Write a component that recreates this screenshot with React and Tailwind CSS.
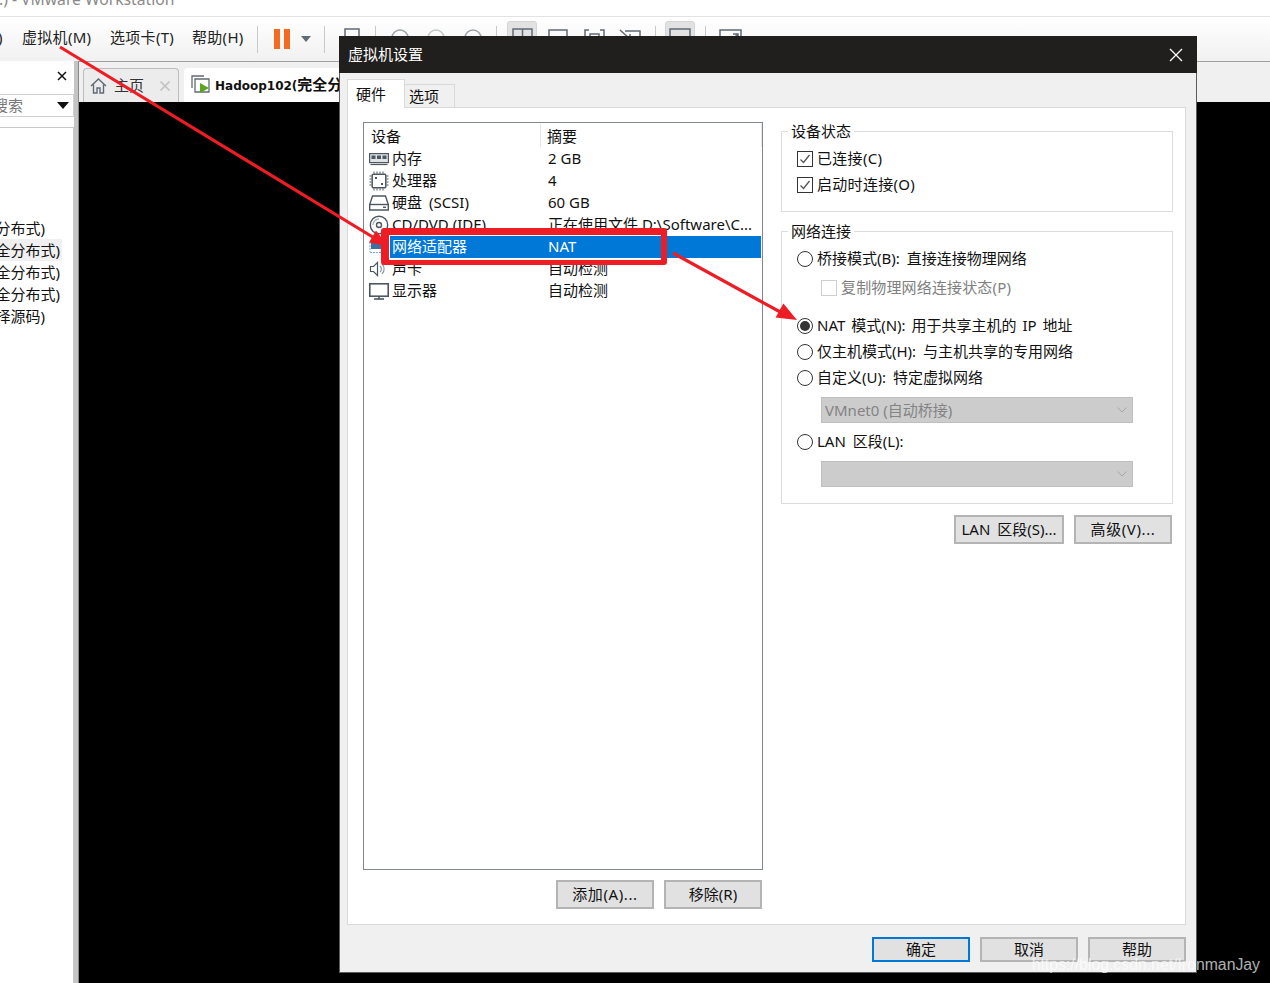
const ui = { fontFamily: '"Noto Sans","Noto Sans CJK SC",sans-serif' };

const G = "#5f6b75";
const D = "#4c5761";

function ToolSep({ ml }) {
  return <span className={`w-px h-[27px] bg-[#c9c9c9] shrink-0 ${ml}`} />;
}

function Rows() {
  return [
    { icon: <MemIcon />, a: "内存", b: "2 GB" },
    { icon: <CpuIcon />, a: "处理器", b: "4" },
    { icon: <HddIcon />, a: "硬盘 (SCSI)", b: "60 GB", wide: true },
    { icon: <CdIcon />, a: "CD/DVD (IDE)", b: "正在使用文件 D:\\Software\\C..." },
    { icon: <NetIcon />, a: "网络适配器", b: "NAT", sel: true },
    { icon: <SpkIcon />, a: "声卡", b: "自动检测" },
    { icon: <MonIcon />, a: "显示器", b: "自动检测" },
  ].map((r) => (
    <div key={r.a} className="flex h-[22px] items-stretch pr-px">
      <div className="w-[26px] pl-[5px] flex items-center shrink-0">{r.icon}</div>
      <div className={`flex flex-1 items-center pl-[2px] pb-px leading-none whitespace-nowrap ${r.sel ? "bg-[#0078d7] text-white" : "text-[#111]"}`}>
        <span className={`w-[156px] shrink-0 ${r.wide ? "[word-spacing:3px]" : ""}`}>{r.a}</span>
        <span>{r.b}</span>
      </div>
    </div>
  ));
}

function MemIcon() {
  return (
    <svg width="20" height="14" viewBox="0 0 20 14" fill="none" stroke={D} strokeWidth="1.2">
      <rect x="0.6" y="1.6" width="18.8" height="9" fill="#dfe3e6" />
      <rect x="2.5" y="3.5" width="4" height="3.5" fill={D} stroke="none" />
      <rect x="8" y="3.5" width="4" height="3.5" fill={D} stroke="none" />
      <rect x="13.5" y="3.5" width="4" height="3.5" fill={D} stroke="none" />
      <path d="M1.5 12.5h17" />
    </svg>
  );
}
function CpuIcon() {
  return (
    <svg width="20" height="20" viewBox="0 0 20 20" fill="none" stroke={D}>
      <rect x="3.2" y="3.2" width="13.6" height="13.6" rx="1" strokeWidth="1.5" />
      <path d="M5 0.5v2M8 0.5v2M11 0.5v2M14 0.5v2M5 17.5v2M8 17.5v2M11 17.5v2M14 17.5v2M0.5 5h2M0.5 8h2M0.5 11h2M0.5 14h2M17.5 5h2M17.5 8h2M17.5 11h2M17.5 14h2" />
      <rect x="6" y="6" width="2" height="2" fill={D} stroke="none" />
      <rect x="12" y="12" width="2" height="2" fill={D} stroke="none" />
    </svg>
  );
}
function HddIcon() {
  return (
    <svg width="20" height="16" viewBox="0 0 20 16" fill="none" stroke={D} strokeWidth="1.4">
      <path d="M3.5 1h13l2.8 8.5v5.5H.7V9.5z" />
      <path d="M.7 9.5h18.6" />
      <path d="M14 12.3h3" />
    </svg>
  );
}
function CdIcon() {
  return (
    <svg width="20" height="20" viewBox="0 0 20 20" fill="none" stroke={D} strokeWidth="1.4">
      <circle cx="10" cy="10" r="8.7" />
      <circle cx="10" cy="10" r="2.5" />
      <path d="M4 10a6 6 0 0 1 6-6" stroke="#a9b1b7" />
    </svg>
  );
}
function NetIcon() {
  return (
    <svg width="20" height="18" viewBox="0 0 20 18" fill="none" stroke="#3f6f9f">
      <rect x="2.5" y="2.5" width="9" height="8" fill="#3f6f9f" />
      <path d="M1 14.5h14" strokeDasharray="2 1" stroke="#79a7cf" />
      <path d="M1 4v10" strokeDasharray="2 1" stroke="#79a7cf" />
    </svg>
  );
}
function SpkIcon() {
  return (
    <svg width="18" height="16" viewBox="0 0 18 16" fill="none" stroke={D} strokeWidth="1.2">
      <path d="M1.5 5.5h3l4-4v13l-4-4h-3z" />
      <path d="M11 5a4 4 0 0 1 0 6M13 3a7 7 0 0 1 0 10" stroke="#8f99a1" />
    </svg>
  );
}
function MonIcon() {
  return (
    <svg width="20" height="17" viewBox="0 0 20 17" fill="none" stroke={D} strokeWidth="1.6">
      <rect x="0.8" y="0.8" width="18.4" height="12.4" />
      <path d="M5 16h10" />
      <path d="M10 13.5v2.5" />
    </svg>
  );
}

function Check({ disabled }) {
  return (
    <span className={`w-4 h-4 shrink-0 border flex items-center justify-center bg-white ${disabled ? "border-[#cfcfcf]" : "border-[#333]"}`}>
      {!disabled && (
        <svg width="12" height="12" viewBox="0 0 12 12" fill="none" stroke="#555" strokeWidth="1.3">
          <path d="M1.5 6.5l3 3 6-7.5" />
        </svg>
      )}
    </span>
  );
}

function Radio({ on }) {
  return (
    <span className="w-4 h-4 shrink-0 rounded-full border border-[#333] bg-white flex items-center justify-center">
      {on && <span className="w-[10px] h-[10px] rounded-full bg-[#333]" />}
    </span>
  );
}

function Row({ children, className = "" }) {
  return <div className={`flex items-center h-[22px] leading-none whitespace-nowrap text-[#111] ${className}`}>{children}</div>;
}

function RadioRow({ on, label, className = "" }) {
  return (
    <Row className={className}>
      <Radio on={on} />
      <span className="ml-1 pb-px">{label}</span>
    </Row>
  );
}

function CheckRow({ label, className = "" }) {
  return (
    <Row className={className}>
      <Check />
      <span className="ml-[4px] pb-px tracking-[0.3px]">{label}</span>
    </Row>
  );
}

function Group({ title, className = "", children }) {
  return (
    <div className={`relative border border-[#dcdcdc] pl-[15px] ${className}`}>
      <span className="absolute left-[6px] -top-[12px] h-[22px] bg-white px-[3px] flex items-center leading-none text-[#111]">{title}</span>
      {children}
    </div>
  );
}

function DisabledSelect({ label, className = "" }) {
  return (
    <div className={`ml-[24px] w-[312px] h-[26px] bg-[#cccccc] border border-[#bfbfbf] flex items-center justify-between pl-[3px] pr-[5px] text-[#838383] leading-none whitespace-nowrap [word-spacing:0px] ${className}`}>
      <span>{label}</span>
      <svg width="10" height="6" viewBox="0 0 10 6" fill="none" stroke="#a5a5a5">
        <path d="M0.5 0.5l4.5 4.5 4.5-4.5" />
      </svg>
    </div>
  );
}

function Btn({ w, h = "h-[29px]", children, primary, className = "" }) {
  return (
    <div className={`${w} ${h} flex items-center justify-center bg-[#e1e1e1] border-2 ${primary ? "border-[#0078d7]" : "border-[#b4b4b4]"} leading-none text-[#111] whitespace-nowrap shrink-0 ${className}`}>
      {children}
    </div>
  );
}

function Dialog() {
  return (
    <div className="absolute left-[339px] top-[36px] w-[858px] h-[937px] border border-[#5c5c5c] border-t-0 bg-[#f0f0f0] flex flex-col text-[15px]">
      <div className="h-[37px] bg-[#211f1e] shrink-0 flex items-center justify-between pl-[8px] pr-[14px] text-white leading-none -mx-px">
        <span className="pl-px">虚拟机设置</span>
        <svg width="14" height="14" viewBox="0 0 14 14" stroke="#fff" strokeWidth="1.3">
          <path d="M1 1l12 12M13 1L1 13" />
        </svg>
      </div>
      <div className="h-[34px] flex items-end pl-[7px] shrink-0">
        <div className="relative w-[58px] h-[29px] -mb-px bg-white border border-b-0 border-[#d9d9d9] flex items-center pl-[8px] leading-none text-[#111]">硬件</div>
        <div className="w-[50px] h-[23px] bg-[#f0f0f0] border border-l-0 border-b-0 border-[#d9d9d9] flex items-center pl-[4px] leading-none text-[#111]">选项</div>
      </div>
      <div className="ml-[7px] mr-[10px] h-[818px] shrink-0 bg-white border border-[#d9d9d9] pl-[15px] pt-[14px] flex">
        <div className="w-[400px] shrink-0">
          <div className="h-[748px] border border-[#82878f] bg-white">
            <div className="h-[25px] flex items-stretch text-[#111]">
              <div className="w-[177px] pl-[7px] pt-[2px] flex items-center leading-none border-r border-[#e5e5e5] my-px">设备</div>
              <div className="flex-1 pl-[6px] pt-[2px] flex items-center leading-none border-r border-[#e5e5e5] my-px">摘要</div>
            </div>
            <Rows />
          </div>
          <div className="mt-[10px] flex justify-end gap-[10px] pr-px">
            <Btn w="w-[98px]" className="tracking-[0.6px] pb-px">添加(A)...</Btn>
            <Btn w="w-[98px]" className="pb-px">移除(R)</Btn>
          </div>
        </div>
        <div className="ml-[18px] w-[392px] shrink-0 pt-[9px] [word-spacing:3px]">
          <Group title="设备状态" className="pt-[16px] pb-[15px]">
            <CheckRow label="已连接(C)" />
            <CheckRow label="启动时连接(O)" className="mt-1" />
          </Group>
          <Group title="网络连接" className="mt-[19px] pt-[16px] pb-[16px]">
            <RadioRow label="桥接模式(B): 直接连接物理网络" />
            <Row className="mt-[7px] ml-[24px]">
              <Check disabled />
              <span className="ml-1 pb-px tracking-[0.15px] text-[#7f7f7f]">复制物理网络连接状态(P)</span>
            </Row>
            <RadioRow on label="NAT 模式(N): 用于共享主机的 IP 地址" className="mt-[16px] [word-spacing:2px]" />
            <RadioRow label="仅主机模式(H): 与主机共享的专用网络" className="mt-1" />
            <RadioRow label="自定义(U): 特定虚拟网络" className="mt-1" />
            <DisabledSelect label="VMnet0 (自动桥接)" className="mt-2" />
            <RadioRow label="LAN 区段(L):" className="mt-2" />
            <DisabledSelect label="" className="mt-2" />
          </Group>
          <div className="mt-[11px] flex justify-end gap-[10px] pr-px">
            <Btn w="w-[110px]" className="pb-px">LAN 区段(S)...</Btn>
            <Btn w="w-[98px]" className="tracking-[0.6px] pb-px">高级(V)...</Btn>
          </div>
        </div>
      </div>
      <div className="pt-[12px] pr-[10px] flex justify-end gap-[10px]">
        <Btn w="w-[98px]" h="h-[25px]" primary>确定</Btn>
        <Btn w="w-[98px]" h="h-[25px]">取消</Btn>
        <Btn w="w-[98px]" h="h-[25px]">帮助</Btn>
      </div>
    </div>
  );
}

function Sidebar() {
  const items = [
    ["分布式)", "pr-[17px]", ""],
    ["完全分布式)", "pr-[2px]", "bg-[#f0f0f0]"],
    ["完全分布式)", "pr-[2px]", ""],
    ["完全分布式)", "pr-[2px]", ""],
    ["选择源码)", "pr-[17px]", ""],
  ];
  return (
    <div className="w-[74px] shrink-0 bg-white flex flex-col overflow-hidden">
      <div className="h-[33px] flex items-center justify-end pr-[7px] pb-[4px] shrink-0">
        <svg width="10" height="10" viewBox="0 0 10 10" stroke="#111" strokeWidth="1.5">
          <path d="M1 1l8 8M9 1L1 9" />
        </svg>
      </div>
      <div className="h-[23px] border border-l-0 border-[#d0d0d0] flex items-center justify-between pr-[4px] shrink-0 text-[#777] leading-none overflow-hidden">
        <span className="-ml-[7px] whitespace-nowrap">搜索</span>
        <svg width="12" height="7" viewBox="0 0 12 7" fill="#111">
          <path d="M0 0h12L6 7z" />
        </svg>
      </div>
      <div className="mt-[10px] flex-1 border-t border-r border-[#c8c8c8] pt-[89px]">
        {items.map(([t, p, bg], i) => (
          <div key={i} className={`w-[62px] h-[22px] flex items-center justify-end whitespace-nowrap leading-none text-[#111] overflow-hidden ${p} ${bg}`}>
            {t}
          </div>
        ))}
      </div>
    </div>
  );
}

function Toolbar() {
  return (
    <div className="h-[44px] shrink-0 bg-gradient-to-b from-white to-[#f1f1f1] flex items-center text-[15px] text-[#222]">
      <div className="flex items-center pb-1 leading-none whitespace-nowrap tracking-[0.3px]">
        <span className="-ml-[2px] w-[24px]">)</span>
        <span className="w-[88px]">虚拟机(M)</span>
        <span className="w-[82px]">选项卡(T)</span>
        <span className="w-[65px]">帮助(H)</span>
      </div>
      <ToolSep />
      <span className="ml-[16px] w-[6px] h-[20px] bg-[#f26b21] shrink-0" />
      <span className="ml-[4px] w-[6px] h-[20px] bg-[#f26b21] shrink-0" />
      <svg className="ml-[11px] shrink-0" width="10" height="6" viewBox="0 0 10 6" fill={G}>
        <path d="M0 0h10L5 6z" />
      </svg>
      <ToolSep ml="ml-[13px]" />
      <svg className="ml-[19px] shrink-0" width="16" height="22" viewBox="0 0 16 22" fill="none" stroke={G} strokeWidth="1.5">
        <rect x="1" y="1" width="14" height="20" />
      </svg>
      <ToolSep ml="ml-[15px]" />
      <svg className="ml-[15px] shrink-0" width="18" height="22" viewBox="0 0 18 22" fill="none" stroke="#9aa3aa" strokeWidth="1.5">
        <circle cx="9" cy="10" r="8" />
      </svg>
      <svg className="ml-[18px] shrink-0" width="18" height="22" viewBox="0 0 18 22" fill="none" stroke="#c0c5c9" strokeWidth="1.5">
        <circle cx="9" cy="10" r="8" />
      </svg>
      <svg className="ml-[19px] shrink-0" width="18" height="22" viewBox="0 0 18 22" fill="none" stroke="#9aa3aa" strokeWidth="1.5">
        <circle cx="9" cy="10" r="8" />
      </svg>
      <ToolSep ml="ml-[14px]" />
      <div className="ml-[10px] w-[30px] h-[36px] rounded-[3px] bg-[#e2e2e2] border border-[#d5d5d5] flex justify-center pt-[6px] shrink-0">
        <svg width="21" height="20" viewBox="0 0 21 20" fill="none" stroke={G} strokeWidth="1.5">
          <rect x="1" y="1" width="19" height="18" />
          <path d="M10.5 1v18" />
        </svg>
      </div>
      <svg className="ml-[11px] shrink-0" width="20" height="20" viewBox="0 0 20 20" fill="none" stroke={G} strokeWidth="1.5">
        <rect x="1" y="1" width="18" height="18" />
      </svg>
      <svg className="ml-[16px] shrink-0" width="21" height="20" viewBox="0 0 21 20" fill="none" stroke={G} strokeWidth="1.5">
        <path d="M5 1H1v18h19V1h-4" />
        <rect x="6" y="5" width="9" height="10" />
      </svg>
      <svg className="ml-[14px] shrink-0" width="22" height="20" viewBox="0 0 22 20" fill="none" stroke={G} strokeWidth="1.5">
        <path d="M6 2h15v17H1V8M1 1l10 9M6 10h5V5" />
      </svg>
      <ToolSep ml="ml-[14px]" />
      <div className="ml-[9px] w-[30px] h-[36px] rounded-[3px] bg-[#e2e2e2] border border-[#d5d5d5] flex justify-center pt-[6px] shrink-0">
        <svg width="22" height="20" viewBox="0 0 22 20" fill="none" stroke={G} strokeWidth="1.5">
          <rect x="1" y="1" width="20" height="18" />
        </svg>
      </div>
      <ToolSep ml="ml-[10px]" />
      <svg className="ml-[13px] shrink-0" width="23" height="20" viewBox="0 0 23 20" fill="none" stroke={G} strokeWidth="1.5">
        <path d="M1 1h21v18H1zM14 5h5v4M19 5l-6 6" />
      </svg>
    </div>
  );
}

function Tabs() {
  return (
    <div className="h-[41px] shrink-0 bg-[#f0f0f0] border-t border-[#a0a0a0] flex items-end pl-[4px] gap-[5px] overflow-hidden">
      <div className="w-[96px] h-[34px] bg-[#ececec] border border-b-0 border-[#bdbdbd] rounded-t-[4px] flex items-center pl-[6px] shrink-0 leading-none text-[#333]">
        <svg width="17" height="16" viewBox="0 0 17 16" fill="none" stroke={G} strokeWidth="1.4">
          <path d="M1 8l7.5-7 7.5 7M3.5 6.5V15h3.5v-5h3v5h3.5V6.5" />
        </svg>
        <span className="ml-[7px]">主页</span>
        <svg className="ml-[16px]" width="10" height="10" viewBox="0 0 10 10" stroke="#c4c4c4" strokeWidth="1.6">
          <path d="M0.5 0.5l9 9M9.5 0.5l-9 9" />
        </svg>
      </div>
      <div className="w-[300px] h-[34px] bg-white rounded-t-[4px] flex items-center pl-[7px] shrink-0 whitespace-nowrap">
        <svg width="20" height="20" viewBox="0 0 20 20" fill="none" stroke={G} strokeWidth="1.3">
          <path d="M1 13V1h12M4 17V4h14v13z" />
          <path d="M9 8l9 5-9 5z" fill="#5aa620" stroke="none" />
        </svg>
        <span className="ml-[4px] font-bold text-[12px] text-[#111] leading-none" style={{ fontFamily: '"DejaVu Sans","Noto Sans CJK SC",sans-serif' }}>
          Hadoop102(<span className="text-[15px]">完全分布式</span>)
        </span>
      </div>
    </div>
  );
}

export default function App() {
  return (
    <div className="relative w-[1270px] h-[983px] overflow-hidden bg-white flex flex-col text-[15px]" style={ui}>
      <div className="h-[17px] shrink-0 border-b border-[#e2e2e2] overflow-hidden">
        <div className="-mt-[12px] text-[15.7px] leading-[22px] text-[#8a8a8a] whitespace-nowrap -ml-[1px]">.) - VMware Workstation</div>
      </div>
      <Toolbar />
      <div className="flex-1 flex min-h-0">
        <Sidebar />
        <div className="w-[4px] shrink-0 bg-[#c4c4c4]" />
        <div className="flex-1 flex flex-col bg-black border-l border-[#8a8a8a] min-w-0">
          <Tabs />
        </div>
      </div>
      <Dialog />
      <div className="absolute left-[381px] top-[228px] w-[286px] h-[37px] border-[#ee1c25] border-l-[8px] border-t-[7px] border-r-[6px] border-b-[5px] rounded-[3px]" />
      <svg className="absolute left-0 top-0 pointer-events-none" width="1270" height="983" viewBox="0 0 1270 983">
        <path d="M60 47L376 239M673 253L782 313" stroke="#ee1c25" strokeWidth="3.2" fill="none" />
        <path d="M388 246L369 242.6L376 230.6z" fill="#ee1c25" />
        <path d="M797 320L775.6 317.4L783.4 303.4z" fill="#ee1c25" />
      </svg>
      <div className="absolute right-[10px] top-[954px] text-[15.8px] leading-[22px] text-white/70 whitespace-nowrap" style={{ fontFamily: '"Liberation Sans",sans-serif' }}>
        https://blog.csdn.net/IronmanJay
      </div>
    </div>
  );
}
